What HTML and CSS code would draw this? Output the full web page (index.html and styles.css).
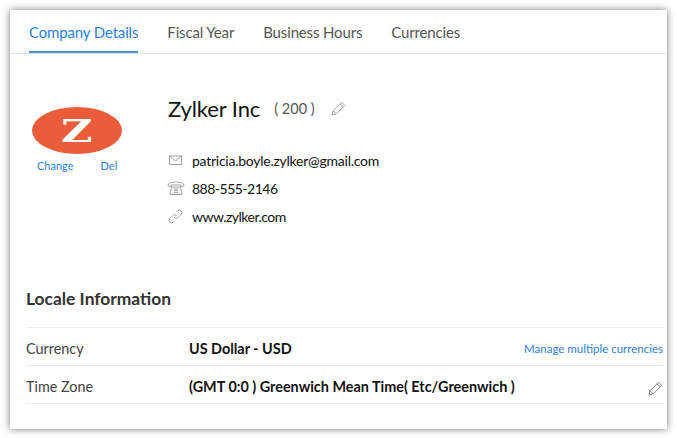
FILE: index.html
```html
<!DOCTYPE html>
<html lang="en">
<head>
    <meta charset="UTF-8">
    <title>Company Details</title>
    <link rel="stylesheet" href="styles.css">
</head>
<body>
    <div class="card">
        <div class="tabs">
            <a class="tab active">Company Details</a>
            <a class="tab">Fiscal Year</a>
            <a class="tab">Business Hours</a>
            <a class="tab">Currencies</a>
        </div>

        <div class="profile">
            <div class="logo-box">
                <div class="logo"><span>Z</span></div>
                <div class="logo-links">
                    <a>Change</a>
                    <a>Del</a>
                </div>
            </div>
            <div class="info">
                <div class="name-row">
                    <h1>Zylker Inc</h1>
                    <span class="count">( 200 )</span>
                    <svg class="pencil" width="15" height="15" viewBox="0 0 15 15"><path d="M10.6 1.2l3.2 3.2-8.6 8.6-4.2 1 1-4.2z M9 2.8l3.2 3.2 M2 9.8l3.2 3.2"/></svg>
                </div>
                <div class="contact">
                    <svg class="icon" width="15" height="15" viewBox="0 0 15 15"><rect x="1.5" y="3" width="12" height="8.5"/><path d="M1.5 3l6 5 6-5"/></svg>
                    <span>patricia.boyle.zylker@gmail.com</span>
                </div>
                <div class="contact tight">
                    <svg class="icon phone" width="18" height="15" viewBox="0 0 18 15"><path d="M1 5C1 2 4.500 1 9 1s8 1 8 4l-3.500.500V4H4.500v1.500z"/><path d="M4.500 6L3 13.500h12L13.500 6z"/><path d="M7 8h4M7 9.700h4M7 11.400h4"/></svg>
                    <span>888-555-2146</span>
                </div>
                <div class="contact tight">
                    <svg class="icon" width="15" height="15" viewBox="0 0 15 15"><path d="M6.500 8.500a2.500 2.500 0 0 0 3.600 0l3-3a2.500 2.500 0 0 0-3.600-3.600L8.500 3"/><path d="M8.500 6.500a2.500 2.500 0 0 0-3.600 0l-3 3a2.500 2.500 0 0 0 3.600 3.600L6.500 12"/></svg>
                    <span>www.zylker.com</span>
                </div>
            </div>
        </div>

        <div class="locale">
            <h2>Locale Information</h2>
            <div class="locale-row">
                <div class="label">Currency</div>
                <div class="value">US Dollar - USD</div>
                <a class="manage">Manage multiple currencies</a>
            </div>
            <div class="locale-row">
                <div class="label">Time Zone</div>
                <div class="value">(GMT 0:0 ) Greenwich Mean Time( Etc/Greenwich )</div>
                <svg class="row-pencil" width="15" height="15" viewBox="0 0 15 15"><path d="M10.6 1.2l3.2 3.2-8.6 8.6-4.2 1 1-4.2z M9 2.8l3.2 3.2 M2 9.8l3.2 3.2"/></svg>
            </div>
        </div>
    </div>
</body>
</html>
```

FILE: styles.css
```css
/* General Styles */
body {
    margin: 0;
    padding: 10px 10px 9px 10px;
    background: #fff;
    font-family: 'Lato', sans-serif;
    color: #111;
}

svg {
    fill: none;
    stroke: #a0a0a0;
    stroke-width: 1;
    flex: none;
}

/* Main Card */
.card {
    height: 419px;
    box-sizing: border-box;
    background: #fff;
    box-shadow: 0 0 7px rgba(0, 0, 0, 0.55);
}

/* Tabs */
.tabs {
    display: flex;
    gap: 29px;
    padding-left: 19px;
    height: 43px;
    border-bottom: 1px solid #e4e4e4;
}

.tab {
    height: 43px;
    box-sizing: border-box;
    padding-top: 12px;
    font-size: 15px;
    line-height: 20px;
    letter-spacing: -0.15px;
    color: #555;
}

.tab.active {
    color: #2f80e0;
    border-bottom: 2px solid #4a90dc;
}

/* Logo and company info */
.profile {
    display: flex;
    height: 229px;
}

.logo-box {
    width: 158px;
    padding: 53px 0 0 22px;
    box-sizing: border-box;
}

.logo {
    width: 90px;
    height: 47px;
    border-radius: 50%;
    background: #ea5d3a;
    display: flex;
    justify-content: center;
    align-items: center;
}

.logo span {
    font-family: 'DejaVu Serif', serif;
    font-weight: bold;
    font-size: 32px;
    line-height: 32px;
    color: #fff;
    transform: scaleX(1.35);
}

.logo-links {
    display: flex;
    gap: 27px;
    padding: 5px 0 0 5px;
    font-size: 11px;
    line-height: 14px;
}

.logo-links a {
    color: #2f80e0;
}

.name-row {
    display: flex;
    align-items: center;
    height: 32px;
    margin-top: 38px;
    margin-bottom: 22px;
}

h1 {
    margin: 0;
    font-size: 22px;
    font-weight: 400;
    letter-spacing: -0.1px;
    color: #111;
}

.count {
    margin-left: 14px;
    font-size: 14.5px;
    color: #555;
}

.pencil {
    margin-left: 16px;
}

.contact {
    display: flex;
    align-items: center;
    height: 28px;
    font-size: 14px;
    letter-spacing: -0.25px;
    color: #111;
}

.contact.tight {
    letter-spacing: -0.5px;
}

.icon {
    margin-right: 9px;
}

.icon.phone {
    margin-left: -1px;
    margin-right: 7px;
}

/* Locale Information */
.locale {
    padding: 0 4px 0 16px;
}

h2 {
    margin: 0;
    height: 45px;
    padding-top: 4px;
    box-sizing: border-box;
    font-size: 17.4px;
    line-height: 24px;
    font-weight: 700;
    color: #333;
    border-bottom: 1px solid #eee;
}

.locale-row {
    display: flex;
    align-items: center;
    height: 38px;
    padding-top: 4px;
    box-sizing: border-box;
    border-bottom: 1px solid #e8e8e8;
}

.label {
    width: 163px;
    font-size: 14.4px;
    color: #444;
}

.value {
    flex: 1;
    font-size: 14.4px;
    font-weight: 700;
    color: #111;
}

.manage {
    font-size: 11.5px;
    color: #2f80e0;
}

.row-pencil {
    margin-top: 4px;
    stroke: #808080;
}
```
